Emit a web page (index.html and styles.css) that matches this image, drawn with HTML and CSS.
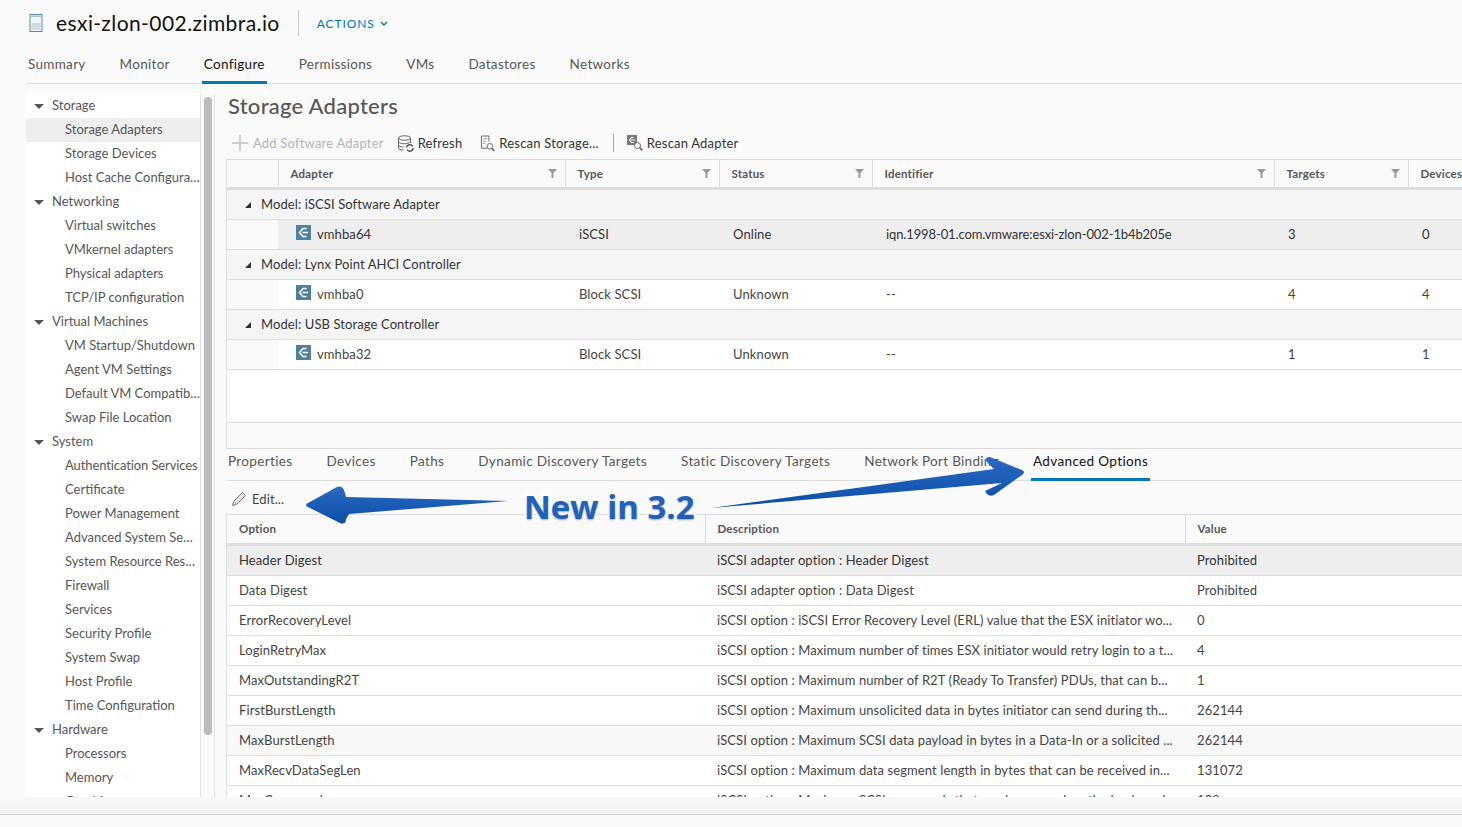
FILE: index.html
```html
<!DOCTYPE html>
<html>
<head>
    <title>esxi-zlon-002.zimbra.io - Configure</title>
    <link rel="stylesheet" href="styles.css">
</head>
<body>
    <header class="host-head">
        <svg class="host-icon" width="14" height="18" viewBox="0 0 14 18">
            <rect x="1" y="0.5" width="12" height="17" fill="#f2f6f8" stroke="#5e8ba5"/>
            <rect x="2" y="1.500" width="10" height="1.500" fill="#a9c3d1"/>
            <rect x="2.500" y="9" width="9" height="7" fill="#cfdbe1"/>
        </svg>
        <h1 class="host-name">esxi-zlon-002.zimbra.io</h1>
        <a class="actions">ACTIONS
            <svg width="8" height="6" viewBox="0 0 8 6"><path d="M1 1l3 3 3-3" fill="none" stroke="#0079b8" stroke-width="1.4"/></svg>
        </a>
    </header>

    <nav class="main-tabs">
        <a>Summary</a>
        <a>Monitor</a>
        <a class="active">Configure</a>
        <a>Permissions</a>
        <a>VMs</a>
        <a>Datastores</a>
        <a>Networks</a>
    </nav>

    <div class="workspace">
        <aside class="tree">
            <div class="tree-group">Storage</div>
            <div class="tree-item selected">Storage Adapters</div>
            <div class="tree-item">Storage Devices</div>
            <div class="tree-item">Host Cache Configuration</div>
            <div class="tree-group">Networking</div>
            <div class="tree-item">Virtual switches</div>
            <div class="tree-item">VMkernel adapters</div>
            <div class="tree-item">Physical adapters</div>
            <div class="tree-item">TCP/IP configuration</div>
            <div class="tree-group">Virtual Machines</div>
            <div class="tree-item">VM Startup/Shutdown</div>
            <div class="tree-item">Agent VM Settings</div>
            <div class="tree-item">Default VM Compatibility</div>
            <div class="tree-item">Swap File Location</div>
            <div class="tree-group">System</div>
            <div class="tree-item tight">Authentication Services</div>
            <div class="tree-item">Certificate</div>
            <div class="tree-item">Power Management</div>
            <div class="tree-item">Advanced System Settings</div>
            <div class="tree-item">System Resource Reservation</div>
            <div class="tree-item">Firewall</div>
            <div class="tree-item">Services</div>
            <div class="tree-item">Security Profile</div>
            <div class="tree-item">System Swap</div>
            <div class="tree-item">Host Profile</div>
            <div class="tree-item">Time Configuration</div>
            <div class="tree-group">Hardware</div>
            <div class="tree-item">Processors</div>
            <div class="tree-item">Memory</div>
            <div class="tree-item">Graphics</div>
        </aside>
        <div class="tree-scroll"><div class="thumb"></div></div>

        <main class="content">
            <h2 class="page-title">Storage Adapters</h2>

            <div class="toolbar">
                <span class="tool disabled">
                    <svg width="16" height="16" viewBox="0 0 16 16"><path d="M8 0v16M0 8h16" stroke="#c4c4c4" stroke-width="1.6"/></svg>
                    Add Software Adapter
                </span>
                <span class="tool">
                    <svg width="17" height="17" viewBox="0 0 17 17" fill="none" stroke="#666"><ellipse cx="7.500" cy="3" rx="6" ry="2.200"/><path d="M1.500 3v10c0 1.200 2.500 2 5 2M13.500 3v5M1.500 6.500c0 1.200 2.500 2.200 6 2.200s6-1 6-2.200M1.500 10c0 1.200 2.500 2 5 2"/><path d="M9.500 12.500a3.200 3.200 0 0 1 6-1M16 13a3.200 3.200 0 0 1-6 1.500" stroke-width="1.500" stroke="#555"/></svg>
                    Refresh
                </span>
                <span class="tool">
                    <svg width="15" height="17" viewBox="0 0 16 17" fill="none" stroke="#666"><path d="M7.500 13.500H1.500v-13h8v6"/><path d="M3.500 3.500h4M3.500 6h3M3.500 8.500h2" stroke="#999"/><circle cx="10.500" cy="11.500" r="3"/><path d="M12.800 13.800l2.500 2.500" stroke-width="1.800"/></svg>
                    Rescan Storage...
                </span>
                <span class="tool-sep"></span>
                <span class="tool">
                    <svg width="16" height="16" viewBox="0 0 16 16" fill="none"><rect x="0" y="0" width="10" height="10" fill="#777"/><path d="M7 2.500H4.500L2.500 5l2 2.500H7M4 5h4.500" stroke="#fff" stroke-width="1.200"/><circle cx="10.500" cy="10.500" r="3" fill="#fff" stroke="#666"/><path d="M12.800 12.800l2.500 2.500" stroke="#666" stroke-width="1.800"/></svg>
                    Rescan Adapter
                </span>
            </div>

            <div class="grid-box adapters">
                <table class="grid">
                    <colgroup>
                        <col class="c-gutter"><col class="c-adapter"><col class="c-type"><col class="c-status"><col class="c-ident"><col class="c-targets"><col class="c-devices">
                    </colgroup>
                    <thead>
                        <tr>
                            <th></th>
                            <th>Adapter<svg class="funnel" width="9" height="9" viewBox="0 0 9 9"><path d="M0 0h9L5.500 4v5h-2V4z"/></svg></th>
                            <th>Type<svg class="funnel" width="9" height="9" viewBox="0 0 9 9"><path d="M0 0h9L5.500 4v5h-2V4z"/></svg></th>
                            <th>Status<svg class="funnel" width="9" height="9" viewBox="0 0 9 9"><path d="M0 0h9L5.500 4v5h-2V4z"/></svg></th>
                            <th>Identifier<svg class="funnel" width="9" height="9" viewBox="0 0 9 9"><path d="M0 0h9L5.500 4v5h-2V4z"/></svg></th>
                            <th>Targets<svg class="funnel" width="9" height="9" viewBox="0 0 9 9"><path d="M0 0h9L5.500 4v5h-2V4z"/></svg></th>
                            <th>Devices</th>
                        </tr>
                    </thead>
                    <tbody>
                        <tr class="model"><td colspan="7"><i class="twisty"></i>Model: iSCSI Software Adapter</td></tr>
                        <tr class="sel">
                            <td class="gutter"></td>
                            <td><span class="hba"><svg width="15" height="15" viewBox="0 0 15 15"><rect width="15" height="15" fill="#4f819f"/><path d="M10.500 3.500H7L3.500 7.500 7 11.500h3.500M6.500 7.500H12" fill="none" stroke="#fff" stroke-width="1.500"/></svg>vmhba64</span></td>
                            <td>iSCSI</td><td>Online</td><td class="ident">iqn.1998-01.com.vmware:esxi-zlon-002-1b4b205e</td><td>3</td><td>0</td>
                        </tr>
                        <tr class="model"><td colspan="7"><i class="twisty"></i>Model: Lynx Point AHCI Controller</td></tr>
                        <tr>
                            <td class="gutter"></td>
                            <td><span class="hba"><svg width="15" height="15" viewBox="0 0 15 15"><rect width="15" height="15" fill="#4f819f"/><path d="M10.500 3.500H7L3.500 7.500 7 11.500h3.500M6.500 7.500H12" fill="none" stroke="#fff" stroke-width="1.500"/></svg>vmhba0</span></td>
                            <td>Block SCSI</td><td>Unknown</td><td>--</td><td>4</td><td>4</td>
                        </tr>
                        <tr class="model"><td colspan="7"><i class="twisty"></i>Model: USB Storage Controller</td></tr>
                        <tr>
                            <td class="gutter"></td>
                            <td><span class="hba"><svg width="15" height="15" viewBox="0 0 15 15"><rect width="15" height="15" fill="#4f819f"/><path d="M10.500 3.500H7L3.500 7.500 7 11.500h3.500M6.500 7.500H12" fill="none" stroke="#fff" stroke-width="1.500"/></svg>vmhba32</span></td>
                            <td>Block SCSI</td><td>Unknown</td><td>--</td><td>1</td><td>1</td>
                        </tr>
                    </tbody>
                </table>
                <div class="grid-empty"></div>
                <div class="grid-foot"></div>
            </div>

            <nav class="sub-tabs">
                <a>Properties</a>
                <a>Devices</a>
                <a>Paths</a>
                <a>Dynamic Discovery Targets</a>
                <a>Static Discovery Targets</a>
                <a class="binding">Network Port Binding</a>
                <a class="active">Advanced Options</a>
            </nav>

            <div class="edit-bar">
                <svg width="16" height="16" viewBox="0 0 16 16" fill="none" stroke="#777"><path d="M1.500 14.500l1-4L11.500 1.500l3 3-9 9z" fill="#e6e6e6"/><path d="M3 10.500l2.500 2.500" stroke="#999"/></svg>
                Edit...
            </div>

            <div class="grid-box options">
                <table class="grid">
                    <colgroup><col class="c-option"><col class="c-desc"><col class="c-value"></colgroup>
                    <thead><tr><th>Option</th><th>Description</th><th>Value</th></tr></thead>
                    <tbody>
                        <tr class="sel"><td>Header Digest</td><td>iSCSI adapter option : Header Digest</td><td>Prohibited</td></tr>
                        <tr><td>Data Digest</td><td>iSCSI adapter option : Data Digest</td><td>Prohibited</td></tr>
                        <tr><td>ErrorRecoveryLevel</td><td>iSCSI option : iSCSI Error Recovery Level (ERL) value that the ESX initiator wo...</td><td>0</td></tr>
                        <tr><td>LoginRetryMax</td><td>iSCSI option : Maximum number of times ESX initiator would retry login to a t...</td><td>4</td></tr>
                        <tr><td>MaxOutstandingR2T</td><td>iSCSI option : Maximum number of R2T (Ready To Transfer) PDUs, that can b...</td><td>1</td></tr>
                        <tr><td>FirstBurstLength</td><td>iSCSI option : Maximum unsolicited data in bytes initiator can send during th...</td><td>262144</td></tr>
                        <tr class="alt"><td>MaxBurstLength</td><td>iSCSI option : Maximum SCSI data payload in bytes in a Data-In or a solicited ...</td><td>262144</td></tr>
                        <tr><td>MaxRecvDataSegLen</td><td>iSCSI option : Maximum data segment length in bytes that can be received in...</td><td>131072</td></tr>
                        <tr><td>MaxCommands</td><td>iSCSI option : Maximum SCSI commands that can be queued on the iscsi session</td><td>128</td></tr>
                    </tbody>
                </table>
            </div>
        </main>
    </div>

    <footer class="page-foot"></footer>

    <!-- annotation drawn over the screenshot -->
    <svg class="callout-arrows" width="1462" height="827" viewBox="0 0 1462 827">
        <defs>
            <linearGradient id="arrowFill" x1="0" y1="0" x2="0" y2="1">
                <stop offset="0" stop-color="#2a69c2"/>
                <stop offset="1" stop-color="#0a4ea8"/>
            </linearGradient>
        </defs>
        <path d="M508 501L346 497L344 490Q342 485 337 487L308 503Q304 505 308 507L340 523Q346 525 346 519L349 514Z" fill="url(#arrowFill)"/>
        <path d="M711 508L994 469L987 462Q984 457 990 457L1022 470Q1026 472 1022 475L994 495Q990 497 987 494L985 491L1002 483Z" fill="url(#arrowFill)"/>
    </svg>
    <div class="callout">New in 3.2</div>
</body>
</html>
```

FILE: styles.css
```css
html, body {
    margin: 0;
    height: 827px;
    overflow: hidden;
}
body {
    position: relative;
    display: flex;
    flex-direction: column;
    background: #fafafa;
    color: #565656;
    font-family: Lato, "Open Sans", sans-serif;
    font-size: 13px;
    letter-spacing: 0.1px;
}
a {
    cursor: pointer;
}

/* host header */
.host-head {
    display: flex;
    align-items: center;
    box-sizing: border-box;
    height: 48px;
    padding: 0 0 2px 29px;
    flex: none;
}
.host-icon {
    margin-right: 13px;
}
.host-name {
    margin: 0;
    padding-right: 18px;
    color: #111;
    font-size: 21px;
    font-weight: 400;
    letter-spacing: 0.42px;
    line-height: 26px;
    border-right: 1px solid #ccc;
}
.actions {
    margin-left: 18px;
    color: #0079b8;
    font-size: 12px;
    letter-spacing: 0.9px;
}
.actions svg {
    margin-left: 1px;
    vertical-align: 1px;
}

/* main tabs */
.main-tabs {
    display: flex;
    gap: 34px;
    height: 35px;
    margin-left: 26px;
    padding-left: 2px;
    border-bottom: 1px solid #ddd;
    flex: none;
}
.main-tabs a {
    position: relative;
    line-height: 33px;
    font-size: 13.5px;
    letter-spacing: 0.3px;
}
.main-tabs .active {
    color: #111;
}
.main-tabs .active::after {
    content: "";
    position: absolute;
    left: -2px;
    right: -2px;
    bottom: -1px;
    height: 3px;
    background: #0079b8;
}

/* body of the page */
.workspace {
    display: flex;
    height: 703px;
    margin-top: 10px;
    margin-left: 26px;
    overflow: hidden;
    flex: none;
}
.tree {
    width: 174px;
    background: #fff;
    border-right: 1px solid #e4e4e4;
    overflow: hidden;
    flex: none;
    letter-spacing: 0;
}
.tree-group, .tree-item {
    height: 24px;
    line-height: 23px;
    white-space: nowrap;
    overflow: hidden;
    text-overflow: ellipsis;
}
.tree-group {
    padding-left: 26px;
    position: relative;
}
.tree-group::before {
    content: "";
    position: absolute;
    left: 8px;
    top: 10px;
    border-left: 5px solid transparent;
    border-right: 5px solid transparent;
    border-top: 5px solid #565656;
}
.tree-item {
    padding-left: 39px;
}
.tree-item.selected {
    background: #eee;
}
.tree-item.tight {
    letter-spacing: -0.1px;
    text-overflow: clip;
}
.tree-scroll {
    width: 14px;
    padding: 3px 2px 0 3px;
    box-sizing: border-box;
    border-right: 1px solid #e4e4e4;
    flex: none;
}
.thumb {
    width: 8px;
    height: 638px;
    background: #bcbcbc;
    border-radius: 4px;
}
.content {
    margin-left: 12px;
    width: 1240px;
    flex: none;
}
.page-title {
    margin: 0;
    height: 33px;
    padding-left: 1px;
    font-size: 22px;
    font-weight: 500;
    line-height: 24px;
    letter-spacing: 0.25px;
}

/* toolbars */
.toolbar {
    display: flex;
    align-items: center;
    height: 32px;
    padding-left: 5px;
    color: #333;
    letter-spacing: 0.2px;
}
.tool {
    display: flex;
    align-items: center;
    gap: 4px;
    margin-right: 18px;
}
.tool.disabled {
    gap: 5px;
    margin-right: 13px;
    color: #b4b4b4;
}
.tool-sep {
    width: 1px;
    height: 18px;
    margin: 0 13px 0 -4px;
    background: #aaa;
}
.edit-bar {
    display: flex;
    align-items: center;
    gap: 5px;
    box-sizing: border-box;
    height: 33px;
    padding: 2px 0 0 4px;
    color: #444;
}

/* grids */
.grid-box {
    border-left: 1px solid #ddd;
    border-top: 1px solid #ddd;
    margin-left: -1px;
}
.grid {
    border-collapse: collapse;
    table-layout: fixed;
    width: 100%;
}
.adapters .grid { width: 1300px; }
.c-gutter { width: 51px; }
.c-adapter { width: 287px; }
.c-type { width: 154px; }
.c-status { width: 153px; }
.c-ident { width: 402px; }
.c-targets { width: 134px; }
.c-option { width: 478px; }
.c-desc { width: 480px; }
.grid th {
    position: relative;
    height: 26px;
    padding: 0 0 1px 12px;
    border-right: 1px solid #ddd;
    border-bottom: 3px solid #ddd;
    font-size: 11.500px;
    font-weight: 700;
    text-align: left;
    letter-spacing: 0.2px;
}
.options .grid th {
    height: 27px;
    padding-bottom: 1px;
}
.grid td {
    height: 27px;
    padding: 0 0 2px 14px;
    border-bottom: 1px solid #ddd;
    background: #fff;
    white-space: nowrap;
    overflow: hidden;
    color: #444;
}
.options .grid td {
    padding-left: 12px;
}
.grid td.ident {
    letter-spacing: -0.12px;
}
.funnel {
    position: absolute;
    right: 8px;
    top: 9px;
    fill: #999;
}
.grid .model td {
    padding-left: 34px;
    position: relative;
    background: #f5f5f5;
    color: #333;
}
.twisty {
    position: absolute;
    left: 18px;
    top: 12px;
    width: 0;
    height: 0;
    border-left: 6px solid transparent;
    border-bottom: 6px solid #333;
}
.grid td.gutter {
    background: #fafafa;
}
.grid .sel td:not(.gutter) {
    background: #eee;
}
.grid .sel td {
    color: #333;
}
.grid .alt td {
    background: #f8f8f8;
}
.hba {
    display: flex;
    align-items: center;
    gap: 6px;
    margin-left: 4px;
}
.hba svg {
    margin-top: -3px;
}
.grid-empty {
    height: 52px;
    background: #fff;
    border-bottom: 1px solid #ddd;
}
.grid-foot {
    height: 25px;
    background: #fafafa;
    border-bottom: 1px solid #ddd;
}

/* lower tabs */
.sub-tabs {
    display: flex;
    gap: 34px;
    height: 31px;
    padding-left: 1px;
    border-bottom: 1px solid #ddd;
}
.sub-tabs a {
    position: relative;
    line-height: 25px;
    font-size: 13.5px;
    letter-spacing: 0.36px;
}
.sub-tabs .binding {
    letter-spacing: 0.3px;
}
.sub-tabs .active {
    color: #111;
}
.sub-tabs .active::after {
    content: "";
    position: absolute;
    left: -2px;
    right: -2px;
    bottom: -1px;
    height: 3px;
    background: #0079b8;
}

.page-foot {
    height: 17px;
    flex: none;
    background: linear-gradient(#f8f8f8, #f2f2f2);
    border-bottom: 1px solid #ccc;
}

/* annotation over the page */
.callout-arrows {
    position: absolute;
    left: 0;
    top: 0;
    pointer-events: none;
}
.callout {
    position: absolute;
    left: 524px;
    top: 485px;
    color: #1f62bd;
    font-family: "Open Sans", sans-serif;
    font-size: 33px;
    font-weight: 700;
    letter-spacing: 0;
    line-height: 44px;
    -webkit-text-stroke: 4px #fff;
    paint-order: stroke fill;
    text-shadow: 0 1px 2px rgba(0, 0, 0, 0.35);
    white-space: nowrap;
}
```
